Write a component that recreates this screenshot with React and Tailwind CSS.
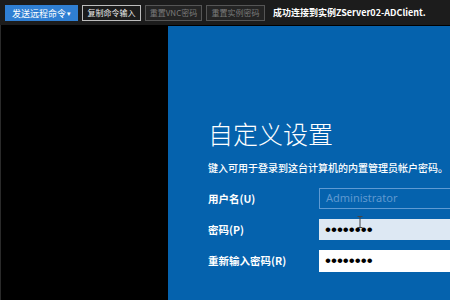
import React from 'react';

const cjk = { fontFamily: '"Noto Sans CJK SC", "Noto Sans", sans-serif' };

const ToolButton = ({ children, disabled, primary, width }) => {
  let cls = 'h-[16px] flex items-center justify-center border text-[8px] leading-none';
  if (primary) cls += ' bg-[#2f7fd3] border-[#2f7fd3] text-white text-[9px]';
  else if (disabled) cls += ' bg-[#242424] border-[#555] text-[#7a7a7a]';
  else cls += ' bg-[#1c1c1c] border-[#bdbdbd] text-[#eeeeee]';
  return (
    <div className={cls} style={{ width }}>
      {children}
    </div>
  );
};

export default function App() {
  return (
    <div className="w-[450px] h-[300px] overflow-hidden bg-black flex flex-col" style={cjk}>
      {/* toolbar */}
      <div className="h-[25px] shrink-0 bg-[#1c1c1c] flex items-center pl-[5px] gap-[4px] pt-[1px]">
        <ToolButton primary width={73}>
          发送远程命令<span className="ml-[1px] text-[7px]">▾</span>
        </ToolButton>
        <ToolButton width={59}>复制命令输入</ToolButton>
        <ToolButton disabled width={57}>重置VNC密码</ToolButton>
        <ToolButton disabled width={59}>重置实例密码</ToolButton>
        <span className="ml-[4px] text-[9px] font-bold text-white whitespace-nowrap">
          成功连接到实例ZServer02-ADClient.
        </span>
      </div>

      {/* desktop */}
      <div className="flex-1 flex pt-[1px] border-l border-[#2a2a2a]">
        <div className="w-[167px] shrink-0 bg-black" />
        <div className="flex-1 overflow-hidden bg-[#0562ad] pl-[40px] pt-[92px] text-white">
          <div className="text-[25px] font-light leading-[30px] whitespace-nowrap">自定义设置</div>
          <div className="mt-[13px] text-[10px] font-medium leading-[14px] whitespace-nowrap">
            键入可用于登录到这台计算机的内置管理员帐户密码。
          </div>

          <div className="mt-[13px] flex flex-col gap-[10px]">
            <div className="flex items-center h-[21px]">
              <div className="w-[111px] shrink-0 text-[10.5px] font-bold">用户名(U)</div>
              <div className="w-[160px] shrink-0 h-[21px] border border-[#5e9ad3] flex items-center pl-[6px] text-[11px] text-[#5f99d0]" style={{ fontFamily: '"Noto Sans", "Open Sans", sans-serif' }}>
                Administrator
              </div>
            </div>
            <div className="flex items-center h-[21px]">
              <div className="w-[111px] shrink-0 text-[10.5px] font-bold">密码(P)</div>
              <div className="relative w-[160px] shrink-0 h-[21px] bg-[#dde8f3] flex items-center pl-[6px] text-[17px] text-black" style={{ fontFamily: '"Liberation Sans", sans-serif' }}>
                ••••••••
                <svg className="absolute left-[38px] top-[-3px]" width="6" height="12" viewBox="0 0 6 12">
                  <path d="M0.5 0.5h5M3 0.5v11M0.5 11.5h5" stroke="#444" strokeWidth="1" fill="none" />
                </svg>
              </div>
            </div>
            <div className="flex items-center h-[22px]">
              <div className="w-[111px] shrink-0 text-[10.5px] font-bold">重新输入密码(R)</div>
              <div className="w-[160px] shrink-0 h-[22px] bg-white flex items-center pl-[6px] text-[17px] text-black" style={{ fontFamily: '"Liberation Sans", sans-serif' }}>
                ••••••••
              </div>
            </div>
          </div>
        </div>
      </div>
    </div>
  );
}
